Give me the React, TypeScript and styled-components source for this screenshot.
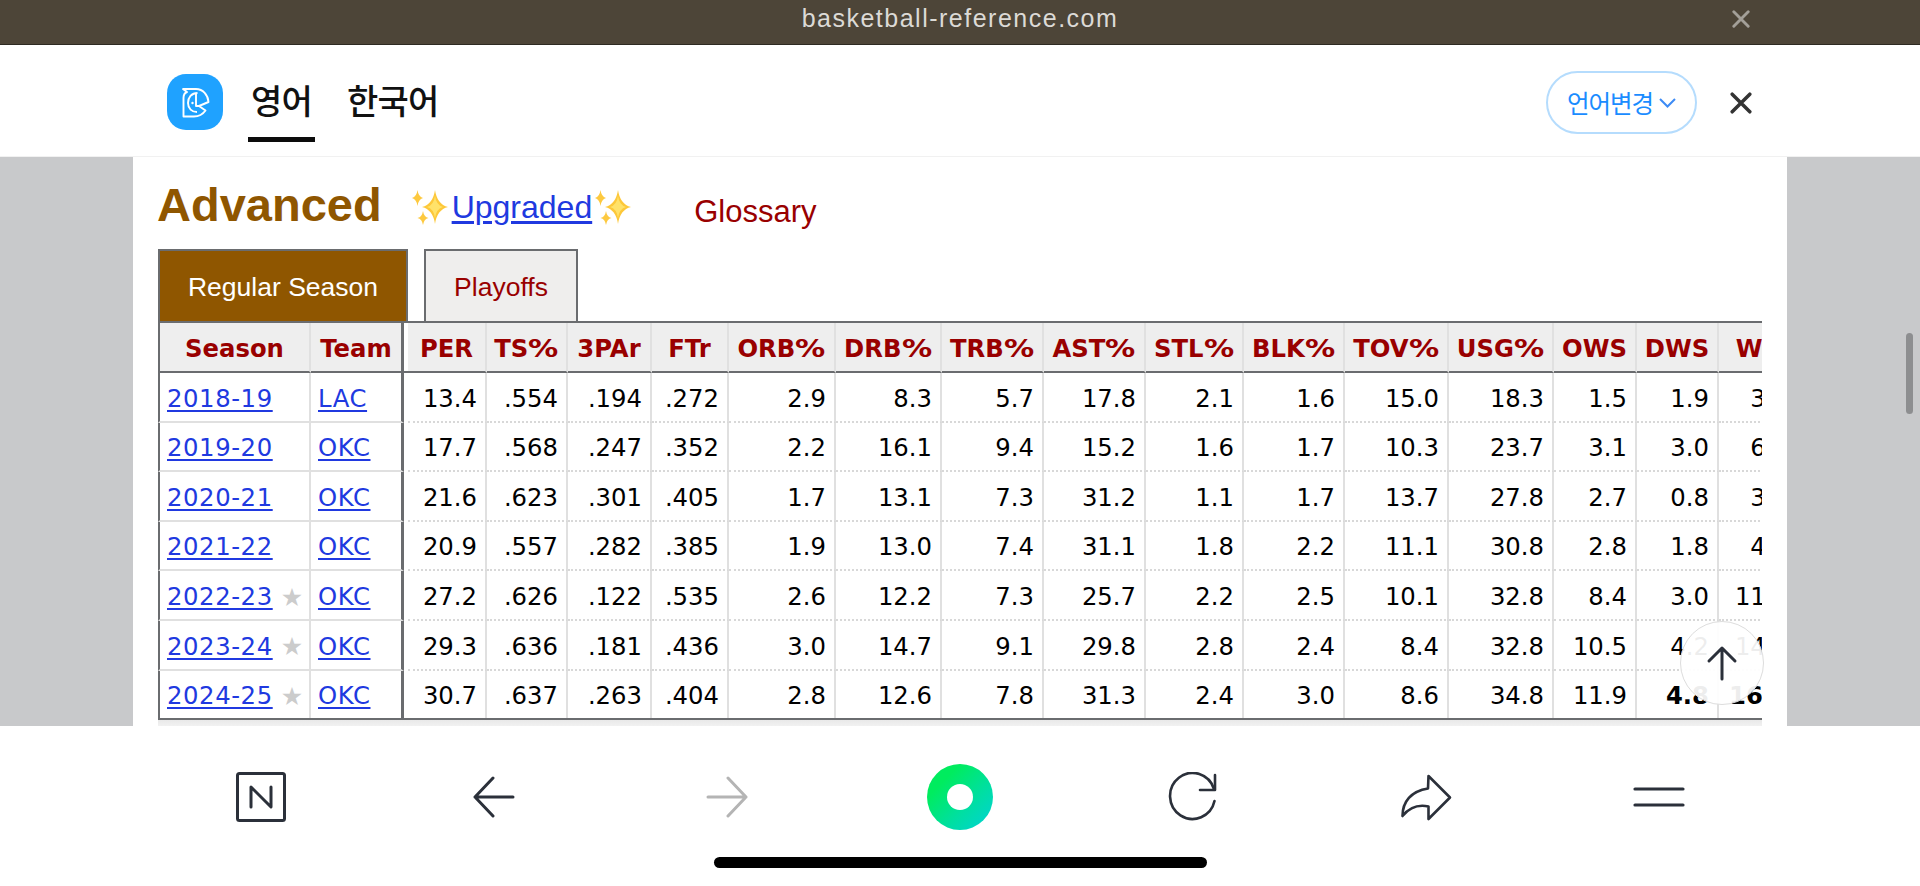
import React from "react";
import styled, { createGlobalStyle } from "styled-components";

const Global = createGlobalStyle`
  html, body { margin: 0; padding: 0; background: #fff; }
  * { box-sizing: border-box; }
`;

const SANS = `"Liberation Sans", Arial, sans-serif`;
const KR = `"Noto Sans CJK KR", "Noto Sans", sans-serif`;
const VERDANA = `"DejaVu Sans", Verdana, sans-serif`;
const DARK_LINE = "#6a6c6f";
const LIGHT_LINE = "#e0e0e0";
const COLS = "153px 93px 4px 79px 81px 84px 77px 107px 106px 102px 102px 98px 101px 104px 105px 83px 82px 80px";

const Page = styled.div`
  position: relative;
  width: 1920px;
  height: 886px;
  display: flex;
  flex-direction: column;
  overflow: hidden;
  background: #fff;
`;

const SourceBar = styled.div`
  flex: 0 0 45px;
  display: grid;
  grid-template-columns: 1fr auto 1fr;
  align-items: start;
  background: #4d4538;
  border-bottom: 1px solid #2e2a22;
`;

const SourceText = styled.div`
  grid-column: 2;
  padding-top: 3px;
  font: 400 25px/30px ${SANS};
  letter-spacing: 1.5px;
  color: #dcdad6;
`;

const SourceClose = styled.div`
  grid-column: 3;
  justify-self: end;
  display: flex;
  padding: 10px 170px 0 0;
`;

const TransHeader = styled.header`
  flex: 0 0 112px;
  display: flex;
  align-items: center;
  padding: 0 168px 0 167px;
  background: #fff;
  border-bottom: 1px solid #f1f1f1;
`;

const AppLogo = styled.div`
  width: 56px;
  height: 56px;
  margin: 2px 25px 0 0;
  border-radius: 19px;
  background: #1fa2ff;
  display: flex;
  align-items: center;
  justify-content: center;
`;

const LangTabs = styled.nav`
  display: flex;
  align-self: stretch;
  gap: 29px;
`;

const LangTab = styled.div<{ $active?: boolean }>`
  height: 97px;
  padding: 27px 3px 0;
  font: 500 34px/56px ${KR};
  color: #111;
  letter-spacing: -0.8px;
  white-space: nowrap;
  border-bottom: 5px solid ${(p) => (p.$active ? "#0c0c0c" : "transparent")};
`;

const Spacer = styled.div`
  flex: 1;
`;

const LangButton = styled.button`
  width: 151px;
  height: 63px;
  margin: 4px 33px 0 0;
  padding: 0;
  display: flex;
  align-items: center;
  justify-content: center;
  gap: 6px;
  background: #fff;
  border: 2px solid #b5dcfd;
  border-radius: 32px;
  font: 400 24.5px/30px ${KR};
  letter-spacing: -1px;
  color: #1a8cff;
`;

const HeaderClose = styled.div`
  display: flex;
  margin-top: 4px;
`;

const Main = styled.main`
  position: relative;
  flex: 1;
  min-height: 0;
  overflow: hidden;
  padding: 0 133px;
  background: #c8c9cb;
`;

const Sheet = styled.section`
  height: 100%;
  overflow: hidden;
  padding: 0 25px;
  background: #fff;
`;

const TitleRow = styled.div`
  display: flex;
  align-items: flex-start;
  height: 92px;
`;

const Title = styled.h2`
  margin: 0 30px 0 -1px;
  padding-top: 24px;
  font: 700 47px/1 ${SANS};
  color: #8f5600;
`;

const Sparkle = styled.svg`
  margin-top: 33px;
  flex: none;
`;

const UpgradedLink = styled.a`
  margin: 34px 3px 0 4px;
  font: 400 32px/1 ${SANS};
  color: #2039e0;
  text-decoration: underline;
  text-underline-offset: 3px;
`;

const GlossaryLink = styled.a`
  margin: 39px 0 0 63px;
  font: 400 31px/1 ${SANS};
  color: #990000;
`;

const TabRow = styled.div`
  display: flex;
  gap: 16px;
  height: 72px;
`;

const SeasonTab = styled.div<{ $active?: boolean }>`
  width: ${(p) => (p.$active ? 250 : 154)}px;
  height: 72px;
  padding-top: 2px;
  display: flex;
  align-items: center;
  justify-content: center;
  border: 2px solid ${DARK_LINE};
  border-bottom: 0;
  background: ${(p) => (p.$active ? "#8f5600" : "#efeeed")};
  color: ${(p) => (p.$active ? "#fff" : "#990000")};
  font: 400 26.5px/30px ${SANS};
`;

const StatsTable = styled.div`
  width: 1604px;
  overflow: hidden;
`;

const HeadRow = styled.div`
  display: grid;
  grid-template-columns: ${COLS};
  width: 1641px;
  height: 52px;
  background: #eeeeee;
  border-top: 2px solid ${DARK_LINE};
`;

const DataRow = styled.div`
  display: grid;
  grid-template-columns: ${COLS};
  width: 1641px;
  height: 49.6px;
`;

const FootRow = styled.div`
  position: relative;
  height: 10px;
  width: 1641px;
  margin-top: -2px;
  background: linear-gradient(#e9e9e9, #f4f4f4);
  border-top: 2px solid ${DARK_LINE};
`;

const HeadCell = styled.div<{ $first?: boolean; $frozenEnd?: boolean }>`
  display: flex;
  align-items: center;
  justify-content: center;
  padding-top: 4px;
  font: 700 24.3px/1 ${VERDANA};
  color: #990000;
  white-space: nowrap;
  border-bottom: 2px solid ${DARK_LINE};
  border-left: ${(p) => (p.$first ? `2px solid ${DARK_LINE}` : "0")};
  border-right: ${(p) => (p.$frozenEnd ? `3px solid ${DARK_LINE}` : `2px solid ${LIGHT_LINE}`)};
`;

const PercentSign = styled.span`
  display: inline-block;
  margin: 0 3px 0 3px;
  transform: scaleX(1.24);
`;

const HeadGap = styled.div`
  background: #fff;
  border-bottom: 2px solid ${DARK_LINE};
`;

const FrozenCell = styled.div<{ $first?: boolean; $frozenEnd?: boolean }>`
  display: flex;
  align-items: center;
  padding: 4px 0 0 7px;
  font: 400 24.3px/1 ${VERDANA};
  white-space: nowrap;
  border-bottom: 2px solid ${LIGHT_LINE};
  border-left: ${(p) => (p.$first ? `2px solid ${DARK_LINE}` : "0")};
  border-right: ${(p) => (p.$frozenEnd ? `3px solid ${DARK_LINE}` : `2px solid ${LIGHT_LINE}`)};
`;

const RowLink = styled.a`
  color: #2039e0;
  letter-spacing: 0.6px;
  text-decoration: underline;
  text-underline-offset: 3px;
`;

const Star = styled.span`
  margin-left: 8px;
  font: 400 25px/1 ${VERDANA};
  color: #cccccc;
`;

const NumCell = styled.div<{ $bold?: boolean }>`
  display: flex;
  align-items: center;
  justify-content: flex-end;
  padding: 4px 8px 0 0;
  font: ${(p) => (p.$bold ? 700 : 400)} 24.3px/1 ${VERDANA};
  color: #000;
  white-space: nowrap;
  border-bottom: 2px dotted #d8d8d8;
  border-right: 2px solid ${LIGHT_LINE};
`;

const RowGap = styled.div``;

const ScrollThumb = styled.div`
  position: absolute;
  top: 176px;
  right: 7px;
  width: 7px;
  height: 81px;
  border-radius: 4px;
  background: #8d8e90;
`;

const UpButton = styled.div`
  position: absolute;
  left: 1680px;
  top: 621px;
  width: 84px;
  height: 84px;
  display: flex;
  align-items: center;
  justify-content: center;
  border-radius: 50%;
  background: rgba(255, 255, 255, 0.93);
  border: 1px solid #dddddd;
`;

const BottomBar = styled.footer`
  flex: 0 0 160px;
  padding-top: 38px;
  background: #fff;
`;

const BottomIcons = styled.div`
  display: grid;
  grid-template-columns: repeat(7, 233px);
  justify-content: center;
  height: 66px;
`;

const IconSlot = styled.div`
  display: flex;
  align-items: center;
  justify-content: center;
`;

const HomeBrand = styled.div`
  position: relative;
  width: 66px;
  height: 66px;
  border-radius: 50%;
  background: linear-gradient(135deg, #00ec5e 25%, #00dfa0 62%, #00d2d8 100%);
  display: flex;
  align-items: center;
  justify-content: center;
`;

const HomeBrandHole = styled.div`
  width: 26px;
  height: 26px;
  border-radius: 50%;
  background: #fff;
`;

const HomeIndicator = styled.div`
  width: 493px;
  height: 11px;
  margin: 27px auto 0;
  border-radius: 6px;
  background: #000;
`;

type Row = { season: string; star?: boolean; team: string; vals: string[]; bold?: number[] };

const HEAD = ["PER", "TS%", "3PAr", "FTr", "ORB%", "DRB%", "TRB%", "AST%", "STL%", "BLK%", "TOV%", "USG%", "OWS", "DWS", "WS"];

const ROWS: Row[] = [
  { season: "2018-19", team: "LAC", vals: ["13.4", ".554", ".194", ".272", "2.9", "8.3", "5.7", "17.8", "2.1", "1.6", "15.0", "18.3", "1.5", "1.9", "3.4"] },
  { season: "2019-20", team: "OKC", vals: ["17.7", ".568", ".247", ".352", "2.2", "16.1", "9.4", "15.2", "1.6", "1.7", "10.3", "23.7", "3.1", "3.0", "6.1"] },
  { season: "2020-21", team: "OKC", vals: ["21.6", ".623", ".301", ".405", "1.7", "13.1", "7.3", "31.2", "1.1", "1.7", "13.7", "27.8", "2.7", "0.8", "3.5"] },
  { season: "2021-22", team: "OKC", vals: ["20.9", ".557", ".282", ".385", "1.9", "13.0", "7.4", "31.1", "1.8", "2.2", "11.1", "30.8", "2.8", "1.8", "4.6"] },
  { season: "2022-23", star: true, team: "OKC", vals: ["27.2", ".626", ".122", ".535", "2.6", "12.2", "7.3", "25.7", "2.2", "2.5", "10.1", "32.8", "8.4", "3.0", "11.4"] },
  { season: "2023-24", star: true, team: "OKC", vals: ["29.3", ".636", ".181", ".436", "3.0", "14.7", "9.1", "29.8", "2.8", "2.4", "8.4", "32.8", "10.5", "4.2", "14.7"] },
  { season: "2024-25", star: true, team: "OKC", vals: ["30.7", ".637", ".263", ".404", "2.8", "12.6", "7.8", "31.3", "2.4", "3.0", "8.6", "34.8", "11.9", "4.8", "16.7"], bold: [13, 14] },
];

const FourStar = ({ cx, cy, rx, ry, fill }: { cx: number; cy: number; rx: number; ry: number; fill: string }) => {
  const kx = rx * 0.16;
  const ky = ry * 0.16;
  return (
    <path
      fill={fill}
      d={`M${cx} ${cy - ry} Q${cx + kx} ${cy - ky} ${cx + rx} ${cy} Q${cx + kx} ${cy + ky} ${cx} ${cy + ry} Q${cx - kx} ${cy + ky} ${cx - rx} ${cy} Q${cx - kx} ${cy - ky} ${cx} ${cy - ry}Z`}
    />
  );
};

const Sparkles = () => (
  <Sparkle width="36" height="35" viewBox="0 0 36 35">
    <FourStar cx={23} cy={17} rx={13} ry={17} fill="#fdc83a" />
    <FourStar cx={23} cy={17} rx={8} ry={11} fill="#ffe26a" />
    <FourStar cx={5.5} cy={8} rx={5.5} ry={8} fill="#fdc93f" />
    <FourStar cx={11} cy={28} rx={5.5} ry={7} fill="#fdc93f" />
  </Sparkle>
);

const CloseIcon = ({ size, color, width }: { size: number; color: string; width: number }) => (
  <svg width={size} height={size} viewBox="0 0 20 20">
    <path d="M2 2 L18 18 M18 2 L2 18" stroke={color} strokeWidth={width} strokeLinecap="round" fill="none" />
  </svg>
);

const headLabel = (h: string) =>
  h.endsWith("%") ? (
    <>
      {h.slice(0, -1)}
      <PercentSign>%</PercentSign>
    </>
  ) : (
    h
  );

export default function App() {
  return (
    <Page>
      <Global />
      <SourceBar>
        <SourceText>basketball-reference.com</SourceText>
        <SourceClose>
          <CloseIcon size={18} color="#a39f98" width={3.2} />
        </SourceClose>
      </SourceBar>

      <TransHeader>
        <AppLogo>
          <svg width="56" height="56" viewBox="0 0 56 56" fill="none" stroke="#fff" strokeWidth="1.9" strokeLinejoin="round">
            <path d="M16 15 H29 C36 15 41 21 41.5 28 L32 32 L38.5 36.5 C36 40 32 42.5 27 42.5 H16.5 V24 C16.5 21 17.5 19 20 18 Z" />
            <path d="M30.5 19 C24.5 19 21 23.5 21 29 C21 34.5 25 38 30 38" />
            <path d="M29 19 V32 H32" />
            <circle cx="25.5" cy="29" r="1.2" fill="#fff" stroke="none" />
          </svg>
        </AppLogo>
        <LangTabs>
          <LangTab $active>영어</LangTab>
          <LangTab>한국어</LangTab>
        </LangTabs>
        <Spacer />
        <LangButton>
          언어변경
          <svg width="17" height="10" viewBox="0 0 17 10" fill="none">
            <path d="M1 1 L8.5 8.5 L16 1" stroke="#3d8bf5" strokeWidth="2" />
          </svg>
        </LangButton>
        <HeaderClose>
          <CloseIcon size={22} color="#333333" width={3.2} />
        </HeaderClose>
      </TransHeader>

      <Main>
        <Sheet>
          <TitleRow>
            <Title>Advanced</Title>
            <Sparkles />
            <UpgradedLink>Upgraded</UpgradedLink>
            <Sparkles />
            <GlossaryLink>Glossary</GlossaryLink>
          </TitleRow>
          <TabRow>
            <SeasonTab $active>Regular Season</SeasonTab>
            <SeasonTab>Playoffs</SeasonTab>
          </TabRow>
          <StatsTable>
            <HeadRow>
              <HeadCell $first>Season</HeadCell>
              <HeadCell $frozenEnd>Team</HeadCell>
              <HeadGap />
              {HEAD.map((h) => (
                <HeadCell key={h}>{headLabel(h)}</HeadCell>
              ))}
            </HeadRow>
            {ROWS.map((r) => (
              <DataRow key={r.season}>
                <FrozenCell $first>
                  <RowLink>{r.season}</RowLink>
                  {r.star && <Star>★</Star>}
                </FrozenCell>
                <FrozenCell $frozenEnd>
                  <RowLink>{r.team}</RowLink>
                </FrozenCell>
                <RowGap />
                {r.vals.map((v, i) => (
                  <NumCell key={i} $bold={r.bold?.includes(i)}>
                    {v}
                  </NumCell>
                ))}
              </DataRow>
            ))}
            <FootRow />
          </StatsTable>
        </Sheet>
        <ScrollThumb />
      </Main>

      <BottomBar>
        <BottomIcons>
          <IconSlot>
            <svg width="50" height="50" viewBox="0 0 50 50" fill="none" stroke="#2b303a" strokeLinecap="round" strokeLinejoin="round">
              <rect x="1.5" y="1.5" width="47" height="47" rx="2" strokeWidth="3" />
              <path d="M15 35 V15 L35 35 V15" strokeWidth="3" />
            </svg>
          </IconSlot>
          <IconSlot>
            <svg width="42" height="42" viewBox="0 0 42 42" fill="none" stroke="#2b303a" strokeWidth="3" strokeLinecap="round" strokeLinejoin="round">
              <path d="M40 21 H2 M20 2 L2 21 L20 40" />
            </svg>
          </IconSlot>
          <IconSlot>
            <svg width="42" height="42" viewBox="0 0 42 42" fill="none" stroke="#b4b4b4" strokeWidth="3" strokeLinecap="round" strokeLinejoin="round">
              <path d="M2 21 H40 M22 2 L40 21 L22 40" />
            </svg>
          </IconSlot>
          <IconSlot>
            <HomeBrand>
              <HomeBrandHole />
            </HomeBrand>
          </IconSlot>
          <IconSlot>
            <svg width="50" height="50" viewBox="0 0 50 50" fill="none" stroke="#2b303a" strokeWidth="2.6" strokeLinecap="round" strokeLinejoin="round">
              <path d="M46 17 A22.5 23 0 1 0 46.5 29" />
              <path d="M47 3 V18 H32" />
            </svg>
          </IconSlot>
          <IconSlot>
            <svg width="54" height="48" viewBox="0 0 54 48" fill="none" stroke="#2b303a" strokeWidth="2.6" strokeLinecap="round" strokeLinejoin="round">
              <path d="M29.5 3 L51 24.5 L29.5 46 V33.5 C18 31 10 35 3.5 43 C3.5 29 12 18 29 15.5 Z" />
            </svg>
          </IconSlot>
          <IconSlot>
            <svg width="52" height="20" viewBox="0 0 52 20" fill="none" stroke="#2b303a" strokeWidth="3.2" strokeLinecap="round">
              <path d="M2 2 H50 M2 18 H50" />
            </svg>
          </IconSlot>
        </BottomIcons>
        <HomeIndicator />
      </BottomBar>

      <UpButton>
        <svg width="32" height="36" viewBox="0 0 32 36" fill="none" stroke="#2b303a" strokeWidth="3" strokeLinecap="round" strokeLinejoin="round">
          <path d="M16 34 V3 M3 16 L16 3 L29 16" />
        </svg>
      </UpButton>
    </Page>
  );
}
